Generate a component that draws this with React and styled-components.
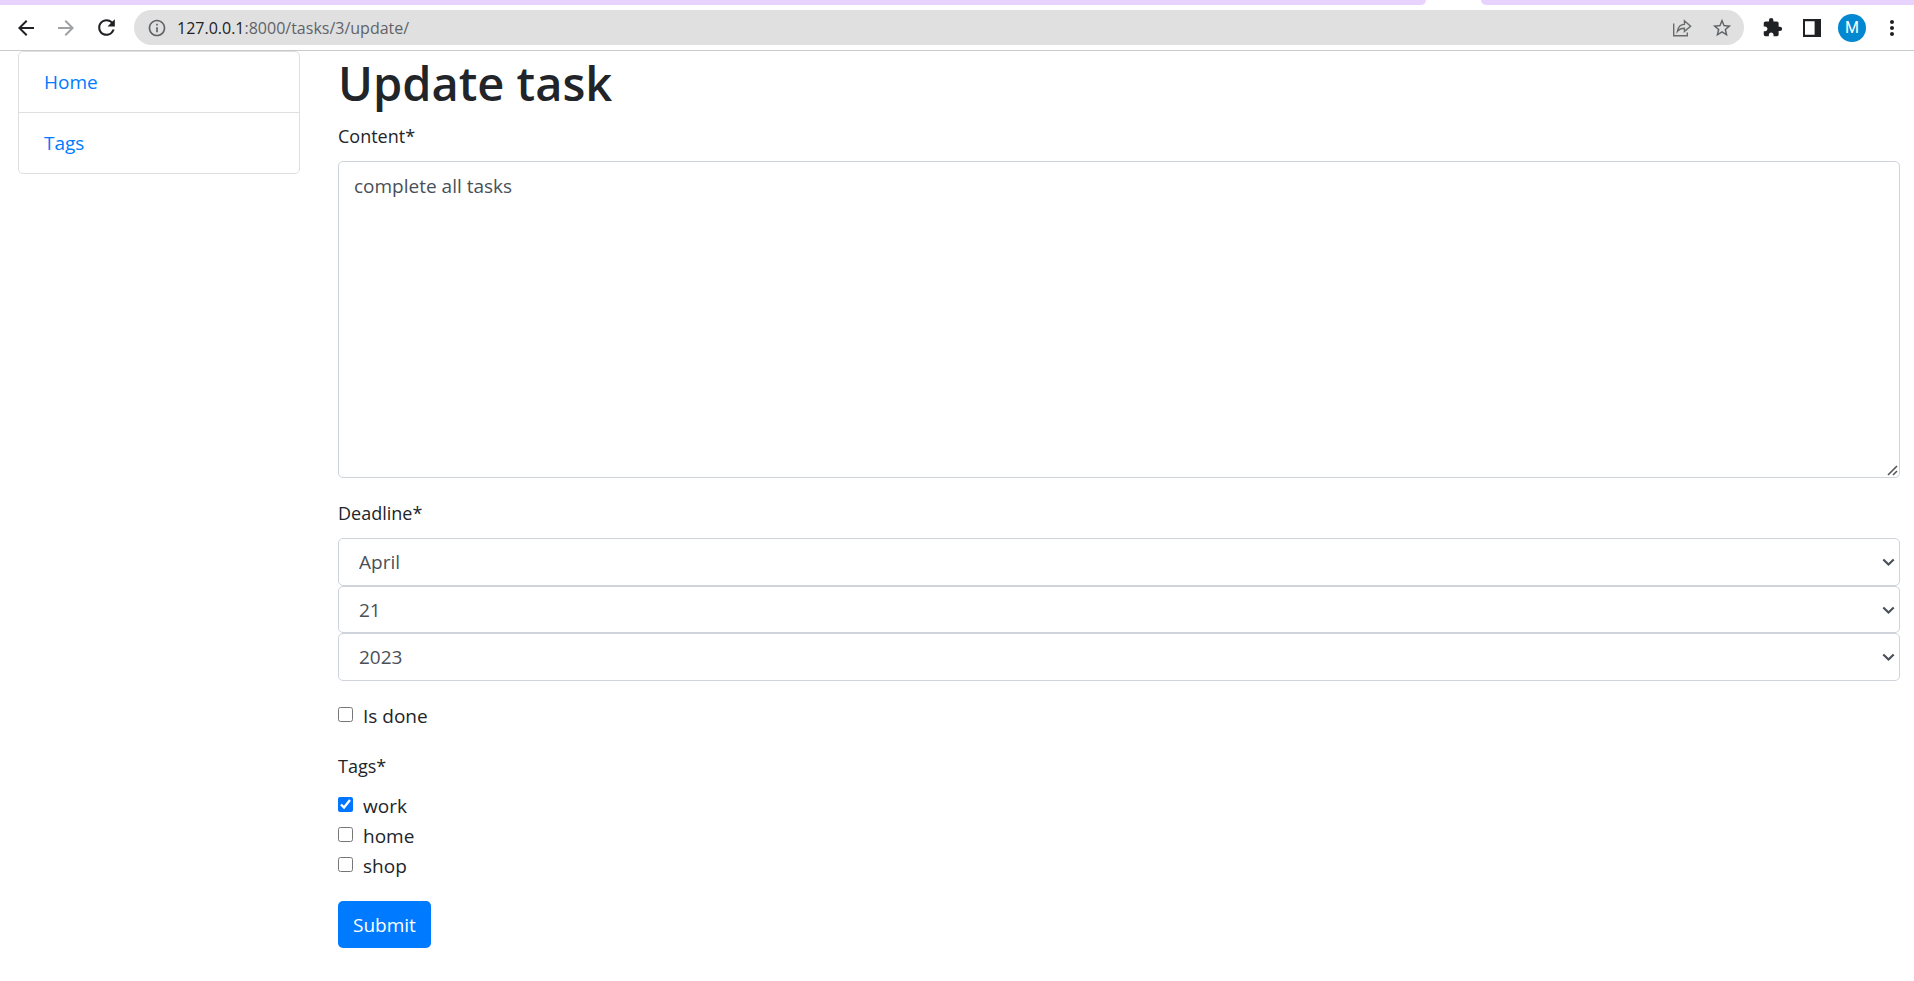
import React from "react";
import styled, { createGlobalStyle } from "styled-components";
import {
  MdArrowBack,
  MdArrowForward,
  MdRefresh,
  MdInfoOutline,
  MdStarBorder,
  MdExtension,
  MdMoreVert,
} from "react-icons/md";

const GlobalStyle = createGlobalStyle`
  *, *::before, *::after { box-sizing: border-box; }
  body {
    margin: 0;
    background: #fff;
    color: #212529;
    font-family: "Segoe UI", "Open Sans", "Noto Sans", sans-serif;
    font-size: 19px;
    line-height: 30px;
  }
`;

const TabStrip = styled.div`
  display: flex;
  height: 5px;
  gap: 55px;
  background: #fff;
`;

const StripPart = styled.div`
  background: #e8d3ff;
  flex: ${(p) => (p.$wide ? "1" : "0 0 433px")};
  border-radius: ${(p) => (p.$wide ? "0 0 10px 0" : "0 0 0 10px")};
`;

const Toolbar = styled.header`
  display: flex;
  align-items: center;
  padding: 5px 2px 5px 6px;
  border-bottom: 1px solid #c9cacc;
`;

const IconButton = styled.button`
  display: flex;
  align-items: center;
  justify-content: center;
  flex: none;
  width: 40px;
  height: 34px;
  padding: 0;
  border: 0;
  background: none;
  color: ${(p) => p.$color || "#202124"};
`;

const AddressBar = styled.div`
  display: flex;
  align-items: center;
  flex: 1;
  height: 35px;
  margin: 0 8px;
  padding: 0 2px 0 13px;
  border-radius: 18px;
  background: #e0e0e0;
  color: #5f6368;
`;

const Url = styled.div`
  flex: 1;
  margin-left: 10px;
  font-size: 16px;
`;

const Host = styled.span`
  color: #202124;
`;

const Avatar = styled.span`
  width: 28px;
  height: 28px;
  border-radius: 50%;
  background: #0288d1;
  color: #fff;
  font: 400 16px/28px Roboto, sans-serif;
`;

const Page = styled.div`
  display: flex;
  align-items: flex-start;
  gap: 38px;
  padding: 0 14px 32px 18px;
`;

const SideNav = styled.nav`
  flex: 0 0 282px;
  border: 1px solid #dfdfdf;
  border-radius: 5px;
`;

const NavItem = styled.a`
  display: block;
  padding: 15px 25px;
  color: #007bff;
  text-decoration: none;

  & + & {
    border-top: 1px solid #dfdfdf;
  }
`;

const Main = styled.main`
  flex: 1;
  min-width: 0;
`;

const Title = styled.h1`
  margin: 0 0 8px;
  padding-top: 2px;
  font-size: 47px;
  font-weight: 600;
  line-height: 60px;
`;

const Field = styled.div`
  margin-bottom: 20px;
`;

const FieldSet = styled.fieldset`
  min-width: 0;
  margin: 0 0 20px;
  padding: 0;
  border: 0;
`;

const Label = styled.label`
  display: block;
  margin-bottom: 10px;
  padding: 0;
  font-size: 18px;
`;

const TextBox = styled.div`
  position: relative;
`;

const TextArea = styled.textarea`
  display: block;
  width: 100%;
  height: 317px;
  padding: 9px 15px;
  border: 1px solid #ced4da;
  border-radius: 5px;
  background: #fff;
  color: #495057;
  font: inherit;
  resize: vertical;

  &::-webkit-resizer {
    display: none;
  }
`;

const Grip = styled.svg`
  position: absolute;
  right: 2px;
  bottom: 2px;
  pointer-events: none;
`;

const DateGroup = styled.div`
  display: grid;
  grid-template-rows: 48px 47px 48px;
`;

const SelectBox = styled.div`
  display: grid;
  position: relative;
`;

const Select = styled.select`
  appearance: none;
  width: 100%;
  padding: 0 20px;
  border: 1px solid #ced4da;
  border-radius: 5px;
  background: #fff;
  color: #495057;
  font: inherit;
`;

const Chevron = styled.svg`
  position: absolute;
  right: 5px;
  top: 50%;
  margin-top: -4px;
  pointer-events: none;
`;

const CheckRow = styled.label`
  display: flex;
  align-items: flex-start;
  gap: 10px;
`;

const CheckBox = styled.input`
  width: 15px;
  height: 15px;
  margin: 6px 0 0;
  accent-color: #0075ff;
`;

const Submit = styled.button`
  display: block;
  height: 47px;
  padding: 0 15px;
  border: 0;
  border-radius: 5px;
  background: #007bff;
  color: #fff;
  font: inherit;
`;

function ShareIcon() {
  return (
    <svg width="20" height="20" viewBox="0 0 20 20" fill="none" stroke="currentColor" strokeWidth="1.4">
      <path d="M1.7 5.500v12.300h13.600v-3.300" />
      <path d="M5.400 13.400c.6-4.300 3-6.800 7-7V2.800l6.200 5.400-6.200 5.200v-3.200c-3.200 0-5.300 1-7 3.200z" />
    </svg>
  );
}

function SidePanelIcon() {
  return (
    <svg width="18" height="18" viewBox="0 0 18 18">
      <path fill="#202124" fillRule="evenodd" d="M0 0h18v18H0zM2 2.200v13.600h9.600V2.200z" />
    </svg>
  );
}

function DateSelect({ label, value }) {
  return (
    <SelectBox>
      <Select aria-label={label} defaultValue={value}>
        <option>{value}</option>
      </Select>
      <Chevron width="13" height="9" viewBox="0 0 13 9" fill="none" stroke="#495057" strokeWidth="2.2">
        <path d="M1.300 1.500l5.200 5 5.200-5" />
      </Chevron>
    </SelectBox>
  );
}

function Check({ label, checked }) {
  return (
    <CheckRow>
      <CheckBox type="checkbox" defaultChecked={checked} />
      {label}
    </CheckRow>
  );
}

export default function App() {
  return (
    <>
      <GlobalStyle />
      <TabStrip>
        <StripPart $wide />
        <StripPart />
      </TabStrip>
      <Toolbar>
        <IconButton aria-label="Back"><MdArrowBack size={24} /></IconButton>
        <IconButton aria-label="Forward" $color="#a0a1a3"><MdArrowForward size={24} /></IconButton>
        <IconButton aria-label="Reload"><MdRefresh size={25} /></IconButton>
        <AddressBar>
          <MdInfoOutline size={20} />
          <Url><Host>127.0.0.1</Host>:8000/tasks/3/update/</Url>
          <IconButton aria-label="Share" $color="#6a6b6d"><ShareIcon /></IconButton>
          <IconButton aria-label="Bookmark" $color="#5f6368"><MdStarBorder size={22} /></IconButton>
        </AddressBar>
        <IconButton aria-label="Extensions"><MdExtension size={21} /></IconButton>
        <IconButton aria-label="Side panel"><SidePanelIcon /></IconButton>
        <IconButton aria-label="Profile"><Avatar>M</Avatar></IconButton>
        <IconButton aria-label="Menu"><MdMoreVert size={24} /></IconButton>
      </Toolbar>
      <Page>
        <SideNav>
          <NavItem href="#home">Home</NavItem>
          <NavItem href="#tags">Tags</NavItem>
        </SideNav>
        <Main>
          <Title>Update task</Title>
          <form onSubmit={(e) => e.preventDefault()}>
            <Field>
              <Label htmlFor="content">Content*</Label>
              <TextBox>
                <TextArea id="content" defaultValue="complete all tasks" />
                <Grip width="11" height="11" viewBox="0 0 11 11" stroke="#555" strokeWidth="1.6">
                  <path d="M1 10L10 1M6 10l4-4" />
                </Grip>
              </TextBox>
            </Field>
            <FieldSet>
              <Label as="legend">Deadline*</Label>
              <DateGroup>
                <DateSelect label="Month" value="April" />
                <DateSelect label="Day" value="21" />
                <DateSelect label="Year" value="2023" />
              </DateGroup>
            </FieldSet>
            <Field>
              <Check label="Is done" />
            </Field>
            <FieldSet>
              <Label as="legend">Tags*</Label>
              <Check label="work" checked />
              <Check label="home" />
              <Check label="shop" />
            </FieldSet>
            <Submit type="submit">Submit</Submit>
          </form>
        </Main>
      </Page>
    </>
  );
}
